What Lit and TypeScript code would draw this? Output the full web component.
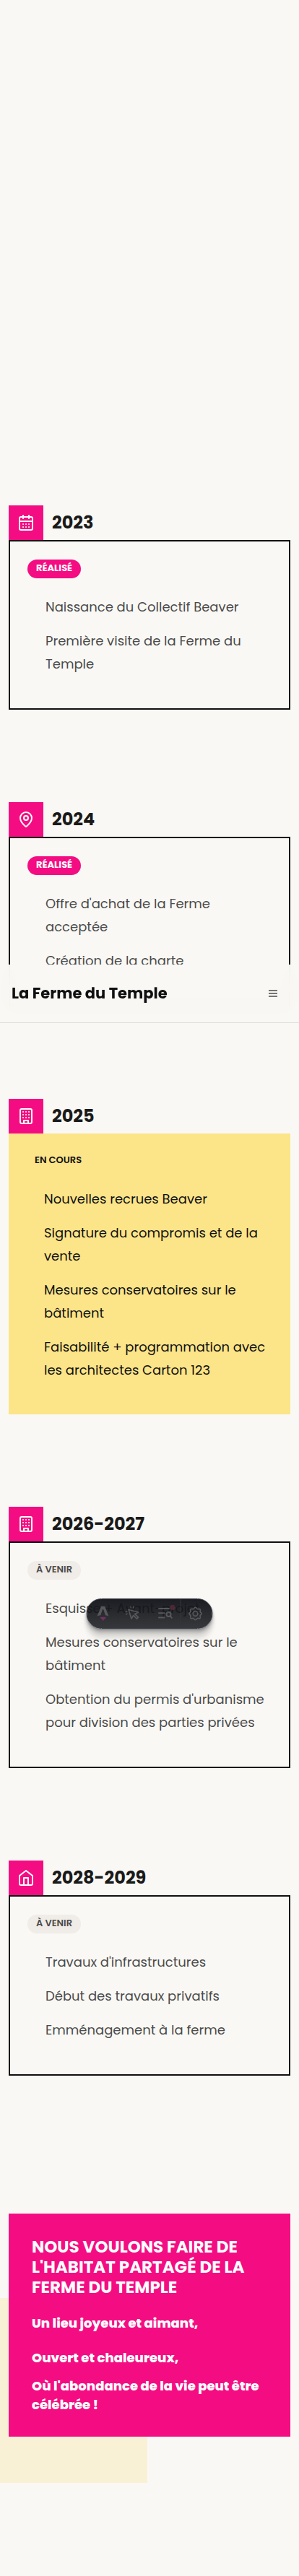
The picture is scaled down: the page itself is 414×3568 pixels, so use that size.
import { LitElement, html, css, svg, nothing } from "lit";
import { customElement } from "lit/decorators.js";
import { classMap } from "lit/directives/class-map.js";

type Status = "done" | "current" | "next";
interface Step {
  year: string;
  icon: keyof typeof ICONS;
  status: Status;
  label: string;
  items: string[];
}

const ICONS = {
  calendar: svg`<path d="M8 2v4M16 2v4M3 10h18M8 14h.01M12 14h.01M16 14h.01M8 18h.01M12 18h.01M16 18h.01"/><rect x="3" y="4" width="18" height="18" rx="2"/>`,
  pin: svg`<path d="M20 10c0 4.993-5.539 10.193-7.399 11.799a1 1 0 0 1-1.202 0C9.539 20.193 4 14.993 4 10a8 8 0 0 1 16 0"/><circle cx="12" cy="10" r="3"/>`,
  building: svg`<rect x="4" y="2" width="16" height="20" rx="2"/><path d="M9 22v-4h6v4M8 6h.01M12 6h.01M16 6h.01M8 10h.01M12 10h.01M16 10h.01M8 14h.01M12 14h.01M16 14h.01"/>`,
  home: svg`<path d="m3 9 9-7 9 7v11a2 2 0 0 1-2 2H5a2 2 0 0 1-2-2z"/><path d="M9 22V12h6v10"/>`,
};

const STEPS: Step[] = [
  { year: "2023", icon: "calendar", status: "done", label: "Réalisé", items: ["Naissance du Collectif Beaver", "Première visite de la Ferme du Temple"] },
  { year: "2024", icon: "pin", status: "done", label: "Réalisé", items: ["Offre d'achat de la Ferme acceptée", "Création de la charte"] },
  {
    year: "2025", icon: "building", status: "current", label: "En cours",
    items: ["Nouvelles recrues Beaver", "Signature du compromis et de la vente", "Mesures conservatoires sur le bâtiment", "Faisabilité + programmation avec les architectes Carton 123"],
  },
  {
    year: "2026-2027", icon: "building", status: "next", label: "À venir",
    items: ["Esquisse + Avant-projet", "Mesures conservatoires sur le bâtiment", "Obtention du permis d'urbanisme pour division des parties privées"],
  },
  { year: "2028-2029", icon: "home", status: "next", label: "À venir", items: ["Travaux d'infrastructures", "Début des travaux privatifs", "Emménagement à la ferme"] },
];

@customElement("timeline-step")
class TimelineStep extends LitElement {
  static properties = { step: { attribute: false } };
  declare step: Step;

  static styles = css`
    :host { display: block; }
    .head { display: flex; align-items: center; gap: 12px; }
    .icon { display: grid; place-items: center; width: 48px; height: 48px; background: #f40d82; }
    .icon svg { width: 24px; height: 24px; fill: none; stroke: #fff; stroke-width: 2; stroke-linecap: round; stroke-linejoin: round; }
    h3 { margin: 0; font-size: 24px; line-height: 32px; font-weight: 700; color: #1a1a1a; }
    .card { border: 2px solid #101010; padding: 25px 24px 45px; color: #4b4b4b; }
    .card.current { border: 0; background: #fce488; color: #101010; }
    .badge { display: inline-block; vertical-align: top; padding: 3px 12px 5px; border-radius: 13px; font-size: 13px; line-height: 18px; font-weight: 600; text-transform: uppercase; }
    .done .badge { background: #f40d82; color: #fff; font-weight: 700; }
    .next .badge { background: #f0ece7; }
    ul { list-style: none; margin: 24px 0 0; padding: 0 0 0 25px; display: flex; flex-direction: column; gap: 15px; font-size: 18px; line-height: 32px; }
    .current ul { margin-right: -12px; }
  `;

  render() {
    const s = this.step;
    if (!s) return nothing;
    return html`
      <div class="head">
        <span class="icon"><svg viewBox="0 0 24 24" aria-hidden="true">${ICONS[s.icon]}</svg></span>
        <h3>${s.year}</h3>
      </div>
      <div class=${classMap({ card: true, [s.status]: true })}>
        <span class="badge">${s.label}</span>
        <ul>${s.items.map((i) => html`<li>${i}</li>`)}</ul>
      </div>`;
  }
}

@customElement("dev-toolbar")
class DevToolbar extends LitElement {
  static styles = css`
    :host { display: block; }
    .bar {
      display: flex; align-items: stretch; height: 40px; overflow: hidden; opacity: 0.96;
      border: 1px solid #343841; border-radius: 21px;
      background: linear-gradient(180deg, #13151a 0%, rgba(19, 21, 26, 0.88) 100%);
      box-shadow: 0 1px 2px rgba(19, 21, 26, 0.29), 0 4px 4px rgba(19, 21, 26, 0.26), 0 10px 6px rgba(19, 21, 26, 0.15), 0 17px 7px rgba(19, 21, 26, 0.04);
    }
    button { appearance: none; border: 0; margin: 0; padding: 0; width: 43px; background: none; color: #505155; display: grid; place-items: center; }
    .settings { border-left: 1px solid #2c2e35; padding-right: 4px; width: 44px; }
    svg { width: 20px; height: 20px; fill: none; stroke: currentColor; stroke-width: 2; stroke-linecap: round; stroke-linejoin: round; overflow: visible; }
  `;

  render() {
    return html`
      <div class="bar" role="toolbar">
        <button aria-label="Menu">
          <svg viewBox="0 0 20 20">
            <path stroke="none" fill="#6b2a5b" d="M6 14.500c1.200.8 2.500.3 4 .3s2.800.5 4-.3c.2 2-1 2.800-2 3.300L10 20.500l-.8-2.400C7.500 17.600 6.200 16.500 6 14.500z"/>
            <path stroke="none" fill="currentColor" fill-rule="evenodd" d="M7.500 0h5.200l5.300 13.500c-1.500-.6-3-1-4.600-1.200L10.600 4h-1L6.800 12.300c-1.700.2-3.200.6-4.800 1.200z"/>
          </svg>
        </button>
        <button aria-label="Inspect">
          <svg viewBox="0 0 20 20"><path d="M2.500 4.500l4 12.500 2.700-4.500 4.800 4.700 2-2-4.800-4.700 4.800-2.300z" stroke-width="1.800"/><path d="M5.500 .5l.4 1.500M9.500 .5L9 2M-1.300 7.500l1.500-.2M-.8 11l1.300-.8" stroke-width="1.500"/></svg>
        </button>
        <button aria-label="Audit">
          <svg viewBox="0 0 20 20"><path d="M1.500 3h14M1.500 9.300h7.500M1.500 15.500h7.500"/><circle cx="15" cy="11" r="3"/><path d="M17.300 13.500l2 2.300"/><circle cx="20.500" cy="1.500" r="3.500" fill="#4d2430" stroke="none"/></svg>
        </button>
        <button class="settings" aria-label="Settings">
          <svg viewBox="0 0 24 24"><circle cx="12" cy="12" r="4"/><path d="M12 1.500c2 0 2 2.300 3.400 2.900s3-1.100 4.400.3-.3 3 .3 4.400 2.400 1.400 2.400 3-1.900 1.600-2.500 3 1.200 3.200-.2 4.600-2.900-.5-4.300.1-1.500 2.700-3.500 2.700-2-2.100-3.400-2.700-2.900 1.300-4.300-.1.300-3.200-.3-4.600-2.400-1.400-2.400-3 1.800-1.600 2.400-3-1.100-3 .3-4.400 3 .3 4.400-.3S10 1.500 12 1.500z"/></svg>
        </button>
      </div>`;
  }
}

@customElement("app-root")
class AppRoot extends LitElement {
  static styles = css`
    :host { display: block; position: relative; overflow: hidden; background: #f9f8f4; color: #101010; font-family: Poppins, Inter, "Open Sans", sans-serif; }
    main { padding: 700px 12px 193px; }
    .timeline { display: flex; flex-direction: column; gap: 128px; }
    .vision { position: relative; margin-top: 191px; }
    .shade { position: absolute; left: -64px; bottom: -64px; width: 256px; height: 256px; background: #f9f1d5; }
    .panel { position: relative; background: #f40d82; color: #fff; padding: 32px 32px 31px; font-weight: 800; font-size: 18px; line-height: 32px; }
    h2 { margin: 0 0 20px; font-size: 23px; line-height: 28px; font-weight: 700; text-transform: uppercase; }
    p { margin: 0 0 16px; }
    .last { margin: -6px -12px 0 0; line-height: 26px; }
    header {
      position: absolute; top: 1336px; left: 0; right: 0; z-index: 2; box-sizing: border-box; height: 81px; padding: 0 16px;
      display: flex; align-items: center; justify-content: space-between;
      background: rgba(249, 248, 244, 0.95); backdrop-filter: blur(12px); border-bottom: 1px solid #dfdfdd;
    }
    .brand { color: #101010; text-decoration: none; font-size: 21px; line-height: 28px; font-weight: 700; }
    .menu { appearance: none; border: 0; background: none; margin: 0; padding: 8px 14px; color: #4b4b4b; display: flex; }
    .menu svg { width: 12px; height: 10px; fill: none; stroke: currentColor; stroke-width: 1.6; display: block; }
    dev-toolbar { position: absolute; top: 2214px; left: 50%; transform: translateX(-50%); z-index: 3; }
  `;

  render() {
    return html`
      <header>
        <a class="brand" href="#">La Ferme du Temple</a>
        <button class="menu" aria-label="Menu"><svg viewBox="0 0 12 10"><path d="M0 1h12M0 5h12M0 9h12"/></svg></button>
      </header>
      <main>
        <section class="timeline">${STEPS.map((s) => html`<timeline-step .step=${s}></timeline-step>`)}</section>
        <section class="vision">
          <div class="shade"></div>
          <div class="panel">
            <h2>Nous voulons faire de l'habitat partagé de la Ferme du Temple</h2>
            <p>Un lieu joyeux et aimant,</p>
            <p>Ouvert et chaleureux,</p>
            <p class="last">Où l'abondance de la vie peut être célébrée !</p>
          </div>
        </section>
      </main>
      <dev-toolbar></dev-toolbar>`;
  }
}
